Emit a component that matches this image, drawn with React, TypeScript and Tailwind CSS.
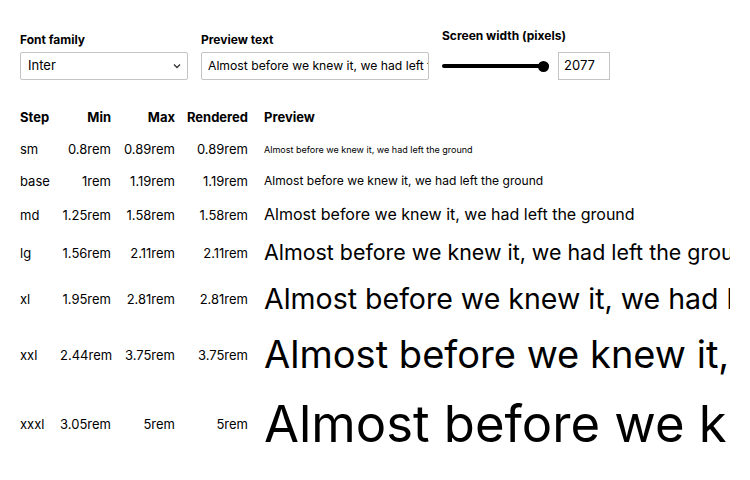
import React from "react";

const rows = [
  { step: "sm", min: "0.8rem", max: "0.89rem", rendered: 0.89 },
  { step: "base", min: "1rem", max: "1.19rem", rendered: 1.19 },
  { step: "md", min: "1.25rem", max: "1.58rem", rendered: 1.58 },
  { step: "lg", min: "1.56rem", max: "2.11rem", rendered: 2.11 },
  { step: "xl", min: "1.95rem", max: "2.81rem", rendered: 2.81 },
  { step: "xxl", min: "2.44rem", max: "3.75rem", rendered: 3.75 },
  { step: "xxxl", min: "3.05rem", max: "5rem", rendered: 5 },
];

const sample = "Almost before we knew it, we had left the ground";

const App = () => {
  return (
    <div className="w-[750px] h-[480px] bg-white text-black overflow-hidden px-5 pt-7 font-['Inter',sans-serif]">
      <div className="flex items-end gap-[13px]">
        <div className="flex flex-col">
          <label className="text-[12px] font-bold leading-4 mb-1">Font family</label>
          <div className="w-[168px] h-[28px] border border-[#c4c4c4] rounded-[2px] flex items-center justify-between pl-[7px] pr-[6px] text-[13px]">
            <span>Inter</span>
            <svg width="8" height="6" viewBox="0 0 8 6" fill="none" stroke="#333" strokeWidth="1.3">
              <path d="M1 1.5 L4 4.5 L7 1.5" />
            </svg>
          </div>
        </div>
        <div className="flex flex-col">
          <label className="text-[12px] font-bold leading-4 mb-1">Preview text</label>
          <div className="w-[228px] h-[28px] border border-[#c4c4c4] rounded-[2px] flex items-center pl-[6px] pr-1 text-[12.2px] overflow-hidden whitespace-nowrap">
            <span>{sample}</span>
          </div>
        </div>
        <div className="flex flex-col">
          <label className="text-[12px] font-bold leading-4 mb-2">Screen width (pixels)</label>
          <div className="flex items-center gap-[9px]">
            <div className="relative w-[107px] h-[12px] flex items-center">
              <div className="w-full h-[4px] bg-black rounded-full" />
              <div className="absolute right-0 w-[11px] h-[11px] rounded-full bg-black" />
            </div>
            <div className="w-[52px] h-[28px] border border-[#c4c4c4] flex items-center pl-[5px] text-[13px]">
              2077
            </div>
          </div>
        </div>
      </div>

      <div className="mt-[21px] grid grid-cols-[40px_51px_64px_73px_1fr] items-center text-[13px]">
        <div className="font-bold py-2 leading-4">Step</div>
        <div className="font-bold py-2 leading-4 text-right">Min</div>
        <div className="font-bold py-2 leading-4 text-right">Max</div>
        <div className="font-bold py-2 leading-4 text-right">Rendered</div>
        <div className="font-bold py-2 leading-4 pl-4">Preview</div>
        {rows.map((r) => (
          <React.Fragment key={r.step}>
            <div className="py-2 leading-4">{r.step}</div>
            <div className="py-2 leading-4 text-right">{r.min}</div>
            <div className="py-2 leading-4 text-right">{r.max}</div>
            <div className="py-2 leading-4 text-right">{r.rendered}rem</div>
            <div className="py-2 pl-4 whitespace-nowrap overflow-hidden leading-[1.2]">
              <span style={{ fontSize: `${r.rendered * 10.15}px` }}>{sample}</span>
            </div>
          </React.Fragment>
        ))}
      </div>
    </div>
  );
};

export default App;
